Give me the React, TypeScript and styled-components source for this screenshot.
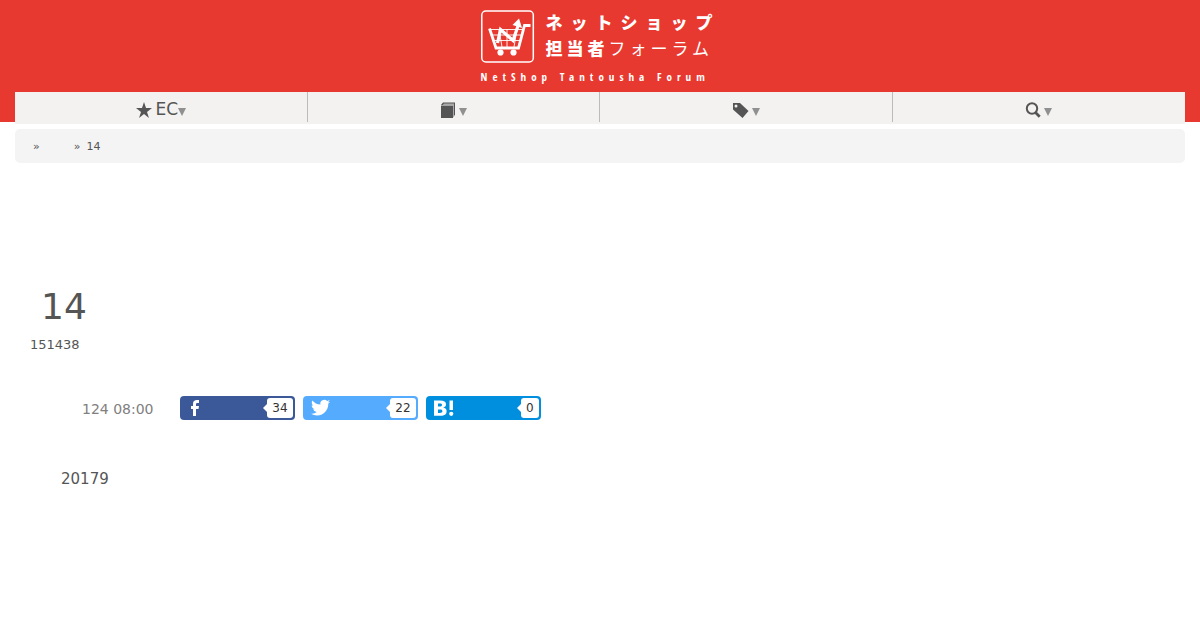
import React from "react";
import styled, { createGlobalStyle } from "styled-components";

const GlobalStyle = createGlobalStyle`
  * { box-sizing: border-box; }
  body {
    margin: 0;
    background: #fff;
    color: #555;
    font-family: "DejaVu Sans", sans-serif;
  }
`;

const Header = styled.header`
  display: flex;
  flex-direction: column;
  align-items: center;
  padding: 9px 15px 0;
  background: #e83930;
`;

const Logo = styled.a`
  display: block;
  height: 83px;
  margin-left: -8px;
  color: #fff;
  text-decoration: none;
`;

const LogoTop = styled.span`
  display: flex;
  gap: 11px;
`;

const LogoMark = styled.svg`
  width: 54px;
  height: 53px;
  margin-top: 1px;
`;

const LogoWords = styled.span`
  display: flex;
  flex-direction: column;
  width: 166px;
`;

const LogoLine = styled.span<{ $tracking: number }>`
  font: 900 17px/26px "Noto Sans CJK JP", sans-serif;
  letter-spacing: ${(p) => p.$tracking}px;
  white-space: nowrap;
`;

const Light = styled.span`
  font-weight: 400;
`;

const LogoCaption = styled.span`
  display: block;
  width: 231px;
  margin-top: 6px;
  font: 400 11px/16px "Open Sans Condensed", "Liberation Sans Narrow", "Liberation Sans", sans-serif;
  letter-spacing: 5px;
  white-space: nowrap;
`;

const Nav = styled.nav`
  display: grid;
  grid-template-columns: repeat(4, 1fr);
  width: 100%;
  margin-bottom: -2px;
  background: #f3f2f0;
`;

const NavItem = styled.a`
  display: flex;
  align-items: center;
  justify-content: center;
  height: 32px;
  padding-top: 4px;
  color: #555;
  font-size: 17px;
  line-height: 20px;
  text-decoration: none;

  &:not(:last-child) {
    background: linear-gradient(#bbb, #bbb) 100% 0 / 1px 30px no-repeat;
  }
`;

const NavIcon = styled.svg`
  width: 16px;
  height: 16px;
  margin-right: 3px;
  fill: currentColor;
`;

const NavLabel = styled.span`
  padding-bottom: 2px;
`;

const Caret = styled.svg`
  width: 8px;
  height: 8px;
  margin-top: 4px;
  fill: #909090;
`;

const Main = styled.main`
  padding: 7px 15px;
`;

const Breadcrumb = styled.nav`
  display: flex;
  height: 34px;
  padding: 1px 18px 0;
  border-radius: 5px;
  background: #f4f4f4;
  font-size: 11px;
  line-height: 34px;
`;

const Crumb = styled.span<{ $gap: number }>`
  margin-right: ${(p) => p.$gap}px;
`;

const Article = styled.article`
  padding: 122px 15px 0;
`;

const Title = styled.h1`
  margin: 0;
  padding-left: 11px;
  font-size: 36px;
  font-weight: 400;
  line-height: 44px;
`;

const Lead = styled.p`
  margin: 8px 0 0;
  font-size: 13px;
  line-height: 16px;
`;

const Meta = styled.div`
  display: flex;
  align-items: center;
  margin-top: 43px;
  padding-left: 52px;
`;

const Published = styled.time`
  margin-right: 26px;
  padding-top: 2px;
  color: #808080;
  font-size: 14px;
  line-height: 22px;
`;

const ShareList = styled.div`
  display: flex;
  gap: 8px;
`;

const Share = styled.a<{ $color: string }>`
  display: flex;
  align-items: center;
  justify-content: space-between;
  width: 115px;
  height: 24px;
  padding: 0 2px 0 7px;
  border-radius: 4px;
  background: ${(p) => p.$color};
  color: #fff;
  text-decoration: none;
`;

const ShareIcon = styled.svg`
  width: 22px;
  height: 20px;
  fill: #fff;
`;

const Count = styled.span`
  position: relative;
  padding: 0 5px;
  border-radius: 3px;
  background: #fff;
  color: #333;
  font-size: 12px;
  line-height: 20px;

  &::before {
    content: "";
    position: absolute;
    top: 6px;
    left: -4px;
    border: 4px solid transparent;
    border-left-width: 0;
    border-right-color: #fff;
  }
`;

const Body = styled.p`
  margin: 49px 0 0;
  padding-left: 31px;
  font-size: 15px;
  line-height: 20px;
`;

const Down = () => (
  <Caret viewBox="0 0 8 8" aria-hidden="true">
    <path d="M0 0h8L4 8z" />
  </Caret>
);

export default function App() {
  return (
    <>
      <GlobalStyle />
      <Header>
        <Logo href="#">
          <LogoTop>
            <LogoMark viewBox="0 0 54 53" fill="none" stroke="#fff" aria-hidden="true">
              <rect x="0.800" y="1" width="51.500" height="51" rx="4" strokeWidth="1.500" />
              <path d="M9 19.500h33M11 25h30M13 30.500h26M18 19l3 18M26 19v18M36 19l-3 18" strokeWidth="0.900" />
              <path d="M8.500 18.500l6.500 19.500h22.500L43.500 15.500h6" strokeWidth="2.800" />
              <path d="M16.500 33l3-13.500 12.500 11 5-14.500" strokeWidth="3.200" />
              <path d="M38 8.500l3 9.500-9.500-3z" fill="#fff" stroke="none" />
              <circle cx="19.500" cy="42.500" r="3.100" fill="#fff" stroke="none" />
              <circle cx="32.500" cy="42.500" r="3.100" fill="#fff" stroke="none" />
            </LogoMark>
            <LogoWords>
              <LogoLine $tracking={8}>ネットショップ</LogoLine>
              <LogoLine $tracking={4}>
                担当者<Light>フォーラム</Light>
              </LogoLine>
            </LogoWords>
          </LogoTop>
          <LogoCaption>NetShop Tantousha Forum</LogoCaption>
        </Logo>
        <Nav>
          <NavItem href="#">
            <NavIcon viewBox="0 0 16 16" aria-hidden="true">
              <path d="M8 0l2 6h6l-5 4 2 6-5-4-5 4 2-6-5-4h6z" />
            </NavIcon>
            <NavLabel>EC</NavLabel>
            <Down />
          </NavItem>
          <NavItem href="#" aria-label="Articles">
            <NavIcon viewBox="0 0 16 16" aria-hidden="true">
              <path d="M3 1h12v12.500l-2 2V3H2z" fill="#aaa" />
              <path d="M1 3.500h12V16H1zM1 3l2-2.500h12V13h-1V1.500H4L2.800 3z" />
            </NavIcon>
            <Down />
          </NavItem>
          <NavItem href="#" aria-label="Tags">
            <NavIcon viewBox="0 0 16 16" aria-hidden="true">
              <path fillRule="evenodd" d="M0 1h7l8.500 8-6 7L0 7.500zM3 2.500a1.500 1.500 0 1 0 0 3 1.500 1.500 0 0 0 0-3z" />
            </NavIcon>
            <Down />
          </NavItem>
          <NavItem href="#" aria-label="Search">
            <NavIcon viewBox="0 0 16 16" aria-hidden="true">
              <g fill="none" stroke="currentColor">
                <circle cx="7" cy="6.500" r="5.200" strokeWidth="2" />
                <path d="M10.500 10.500l4.200 4.200" strokeWidth="2.800" />
              </g>
            </NavIcon>
            <Down />
          </NavItem>
        </Nav>
      </Header>
      <Main>
        <Breadcrumb aria-label="Breadcrumb">
          <Crumb $gap={34}>»</Crumb>
          <Crumb $gap={6}>»</Crumb>
          <span>14</span>
        </Breadcrumb>
        <Article>
          <Title>14</Title>
          <Lead>151438</Lead>
          <Meta>
            <Published>124 08:00</Published>
            <ShareList>
              <Share href="#" $color="#3b5998" aria-label="Facebook 34">
                <ShareIcon viewBox="0 0 22 20" aria-hidden="true">
                  <path d="M6 18v-7H4V8h2V6c0-3 1.500-4 4-4h2v3h-1.500C9.300 5 9 5.500 9 6.500V8h3l-.5 3H9v7z" />
                </ShareIcon>
                <Count>34</Count>
              </Share>
              <Share href="#" $color="#55acff" aria-label="Twitter 22">
                <ShareIcon viewBox="0 0 22 20" aria-hidden="true">
                  <path
                    transform="translate(1 0) scale(.8)"
                    d="M23.950 4.570a10 10 0 0 1-2.820.77 4.960 4.960 0 0 0 2.160-2.720c-.95.550-2 .96-3.130 1.180a4.920 4.920 0 0 0-8.380 4.480C7.690 8.090 4.070 6.130 1.640 3.160a4.820 4.820 0 0 0-.67 2.480c0 1.710.87 3.210 2.190 4.100a4.900 4.900 0 0 1-2.230-.62v.06a4.920 4.920 0 0 0 3.950 4.830 5 5 0 0 1-2.210.08 4.940 4.940 0 0 0 4.600 3.420A9.870 9.870 0 0 1 0 19.540a13.990 13.990 0 0 0 7.550 2.210c9.050 0 14-7.500 14-13.980 0-.21 0-.42-.02-.63a9.940 9.940 0 0 0 2.420-2.570z"
                  />
                </ShareIcon>
                <Count>22</Count>
              </Share>
              <Share href="#" $color="#008fde" aria-label="Hatena 0">
                <ShareIcon viewBox="0 0 22 20" aria-hidden="true">
                  <path
                    fillRule="evenodd"
                    d="M1 2.500h6c4 0 6 1.200 6 3.800 0 1.900-1 2.900-2.800 3.200 2.300.3 3.400 1.500 3.400 3.800 0 3-2.100 4.500-6 4.500H1zM5 5.500v3h1.500C8 8.500 9 8.100 9 7S8.200 5.500 6.700 5.500zM5 11.500v3.400h1.700c1.800 0 2.700-.4 2.700-1.700s-.9-1.700-2.500-1.700zM16.500 2.500H20v9.500h-3.500z"
                  />
                  <circle cx="18.250" cy="15.800" r="2.100" />
                </ShareIcon>
                <Count>0</Count>
              </Share>
            </ShareList>
          </Meta>
          <Body>20179</Body>
        </Article>
      </Main>
    </>
  );
}
